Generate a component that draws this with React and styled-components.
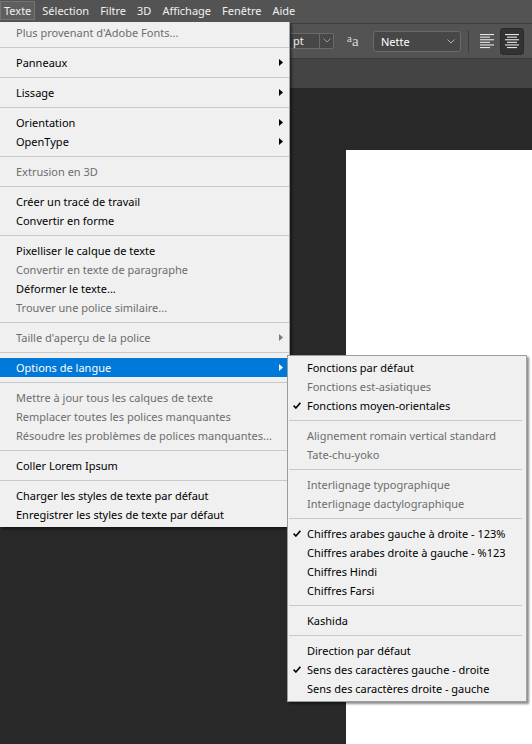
import React from "react";
import styled, { createGlobalStyle } from "styled-components";

const GlobalStyle = createGlobalStyle`
  html, body {
    margin: 0;
    padding: 0;
    background: #282828;
  }
  body {
    font-family: "Noto Sans", "Open Sans", sans-serif;
    font-size: 11px;
  }
`;

const topMenus = ["Texte", "Sélection", "Filtre", "3D", "Affichage", "Fenêtre", "Aide"];

const mainMenu = [
  { label: "Plus provenant d'Adobe Fonts...", disabled: true },
  "sep",
  { label: "Panneaux", sub: true },
  "sep",
  { label: "Lissage", sub: true },
  "sep",
  { label: "Orientation", sub: true },
  { label: "OpenType", sub: true },
  "sep",
  { label: "Extrusion en 3D", disabled: true },
  "sep",
  { label: "Créer un tracé de travail" },
  { label: "Convertir en forme" },
  "sep",
  { label: "Pixelliser le calque de texte" },
  { label: "Convertir en texte de paragraphe", disabled: true },
  { label: "Déformer le texte..." },
  { label: "Trouver une police similaire...", disabled: true },
  "sep",
  { label: "Taille d'aperçu de la police", disabled: true, sub: true },
  "sep",
  { label: "Options de langue", sub: true, active: true },
  "sep",
  { label: "Mettre à jour tous les calques de texte", disabled: true },
  { label: "Remplacer toutes les polices manquantes", disabled: true },
  { label: "Résoudre les problèmes de polices manquantes...", disabled: true },
  "sep",
  { label: "Coller Lorem Ipsum" },
  "sep",
  { label: "Charger les styles de texte par défaut" },
  { label: "Enregistrer les styles de texte par défaut" },
];

const langMenu = [
  { label: "Fonctions par défaut" },
  { label: "Fonctions est-asiatiques", disabled: true },
  { label: "Fonctions moyen-orientales", checked: true },
  "sep",
  { label: "Alignement romain vertical standard", disabled: true },
  { label: "Tate-chu-yoko", disabled: true },
  "sep",
  { label: "Interlignage typographique", disabled: true },
  { label: "Interlignage dactylographique", disabled: true },
  "sep",
  { label: "Chiffres arabes gauche à droite - 123%", checked: true },
  { label: "Chiffres arabes droite à gauche - %123" },
  { label: "Chiffres Hindi" },
  { label: "Chiffres Farsi" },
  "sep",
  { label: "Kashida" },
  "sep",
  { label: "Direction par défaut" },
  { label: "Sens des caractères gauche - droite", checked: true },
  { label: "Sens des caractères droite - gauche" },
];

const Page = styled.div`
  position: relative;
  height: 744px;
  display: flex;
  flex-direction: column;
  overflow: hidden;
`;

const MenuBar = styled.div`
  height: 23px;
  background: #535353;
  display: flex;
  align-items: flex-start;
  gap: 3px;
`;

const TopItem = styled.div`
  height: 19px;
  margin-top: 1px;
  padding: 0 3px;
  display: flex;
  align-items: center;
  color: #f0f0f0;
  font-size: 11px;
  box-sizing: border-box;
  border: 1px solid ${(p) => (p.$open ? "#747474" : "transparent")};
  background: ${(p) => (p.$open ? "#5f5f5f" : "transparent")};
`;

const OptionsBar = styled.div`
  height: 34px;
  border-top: 1px solid #3d3d3d;
  background: #535353;
  display: flex;
  align-items: center;
  padding-left: 280px;
`;

const SizeField = styled.div`
  width: 54px;
  height: 16px;
  box-sizing: border-box;
  border: 1px solid #6b6b6b;
  border-radius: 2px;
  background: #474747;
  display: flex;
  margin-top: -1px;
`;

const SizeValue = styled.div`
  flex: 1;
  padding-left: 12px;
  color: #eeeeee;
  font-size: 11px;
  line-height: 13px;
`;

const SizeToggle = styled.div`
  width: 13px;
  border-left: 1px solid #6b6b6b;
  display: flex;
  align-items: center;
  justify-content: center;
`;

const AntiAlias = styled.div`
  margin-left: 13px;
  width: 14px;
  font-family: "Liberation Serif", serif;
  color: #d8d8d8;
  font-size: 15px;
  line-height: 1;
  display: flex;
  align-items: flex-end;
  margin-top: 1px;

  sup {
    font-size: 11px;
    position: relative;
    top: -5px;
  }
`;

const Dropdown = styled.div`
  margin-left: 12px;
  width: 88px;
  height: 21px;
  box-sizing: border-box;
  border: 1px solid #6a6a6a;
  border-radius: 3px;
  background: #474747;
  display: flex;
  align-items: center;
  justify-content: space-between;
  padding: 0 5px 0 7px;
  color: #ffffff;
  font-size: 11px;
  margin-top: 1px;
`;

const Divider = styled.div`
  margin-left: 7px;
  width: 1px;
  height: 23px;
  background: #3e3e3e;
`;

const AlignIcon = styled.div`
  margin-left: 11px;
  width: 14px;
  height: 16px;
  display: flex;
  align-items: center;
`;

const AlignButton = styled.div`
  margin-left: 6px;
  width: 24px;
  height: 27px;
  box-sizing: border-box;
  border: 1px solid #2c2c2c;
  border-radius: 3px;
  background: #333333;
  display: flex;
  align-items: center;
  justify-content: center;
`;

const TabStrip = styled.div`
  height: 29px;
  border-top: 1px solid #3a3a3a;
  background: #444444;
`;

const Workspace = styled.div`
  flex: 1;
  background: #282828;
  display: flex;
  padding: 62px 0 0 346px;
`;

const Document = styled.div`
  flex: 1;
  background: #ffffff;
`;

const MenuPanel = styled.div`
  position: absolute;
  top: ${(p) => p.$top}px;
  left: ${(p) => p.$left}px;
  width: ${(p) => p.$width}px;
  background: #f0f0f0;
  padding: ${(p) => (p.$sub ? "2px 0 3px" : "1px 0 3px")};
  border: ${(p) => (p.$sub ? "1px solid #9c9c9c" : "none")};
  border-right: 1px solid #a3a3a3;
  box-shadow: 2px 2px 2px rgba(0, 0, 0, 0.45);
  z-index: ${(p) => (p.$sub ? 3 : 2)};
`;

const Row = styled.div`
  height: 19px;
  display: flex;
  align-items: center;
  padding: ${(p) => (p.$sub ? "0 6px 0 5px" : "0 6px 0 16px")};
  font-size: 11px;
  white-space: nowrap;
  color: ${(p) => (p.$active ? "#ffffff" : p.$disabled ? "#6d6d6d" : "#000000")};
  background: ${(p) => (p.$active ? "#0078d7" : "transparent")};
`;

const CheckSlot = styled.span`
  width: 14px;
  display: flex;
  align-items: center;
`;

const Arrow = styled.span`
  margin-left: auto;
  display: flex;
`;

const Separator = styled.div`
  height: 1px;
  margin: ${(p) => (p.$sub ? "5px 4px 5px 1px" : "5px 0")};
  background: #c9c9c9;
`;

const Chevron = ({ color = "#b0b0b0" }) => (
  <svg width="8" height="5" viewBox="0 0 8 5">
    <polyline points="0.5,0.5 4,4 7.5,0.5" fill="none" stroke={color} strokeWidth="1" />
  </svg>
);

const AlignLines = ({ center }) => {
  const widths = [14, 10, 14, 10, 14, 10];
  return (
    <svg width="14" height="16" viewBox="0 0 14 16">
      {widths.map((w, i) => (
        <rect
          key={i}
          x={center ? (14 - w) / 2 : 0}
          y={1 + i * 2.6}
          width={w}
          height="1.1"
          fill="#e6e6e6"
        />
      ))}
    </svg>
  );
};

const Check = () => (
  <svg width="8" height="7" viewBox="0 0 8 7">
    <path d="M0.6 3.6 L2.9 6 L7.4 0.8" fill="none" stroke="#000" strokeWidth="1.6" />
  </svg>
);

const SubArrow = ({ color }) => (
  <svg width="4" height="7" viewBox="0 0 4 7">
    <path d="M0 0 L4 3.5 L0 7 Z" fill={color} />
  </svg>
);

const Menu = ({ items, sub, ...rest }) => (
  <MenuPanel $sub={sub} {...rest}>
    {items.map((item, i) =>
      item === "sep" ? (
        <Separator key={i} $sub={sub} />
      ) : (
        <Row key={i} $sub={sub} $disabled={item.disabled} $active={item.active}>
          {sub && <CheckSlot>{item.checked && <Check />}</CheckSlot>}
          {item.label}
          {item.sub && (
            <Arrow>
              <SubArrow color={item.active ? "#ffffff" : item.disabled ? "#7a7a7a" : "#000000"} />
            </Arrow>
          )}
        </Row>
      )
    )}
  </MenuPanel>
);

const App = () => {
  return (
    <Page>
      <GlobalStyle />
      <MenuBar>
        {topMenus.map((m, i) => (
          <TopItem key={m} $open={i === 0}>
            {m}
          </TopItem>
        ))}
      </MenuBar>
      <OptionsBar>
        <SizeField>
          <SizeValue>pt</SizeValue>
          <SizeToggle>
            <Chevron color="#9a9a9a" />
          </SizeToggle>
        </SizeField>
        <AntiAlias>
          <sup>a</sup>a
        </AntiAlias>
        <Dropdown>
          Nette
          <Chevron />
        </Dropdown>
        <Divider />
        <AlignIcon>
          <AlignLines />
        </AlignIcon>
        <AlignButton>
          <AlignLines center />
        </AlignButton>
      </OptionsBar>
      <TabStrip />
      <Workspace>
        <Document />
      </Workspace>

      <Menu items={mainMenu} $top={22} $left={0} $width={289} />
      <Menu items={langMenu} sub $top={355} $left={287} $width={238} />
    </Page>
  );
};

export default App;
